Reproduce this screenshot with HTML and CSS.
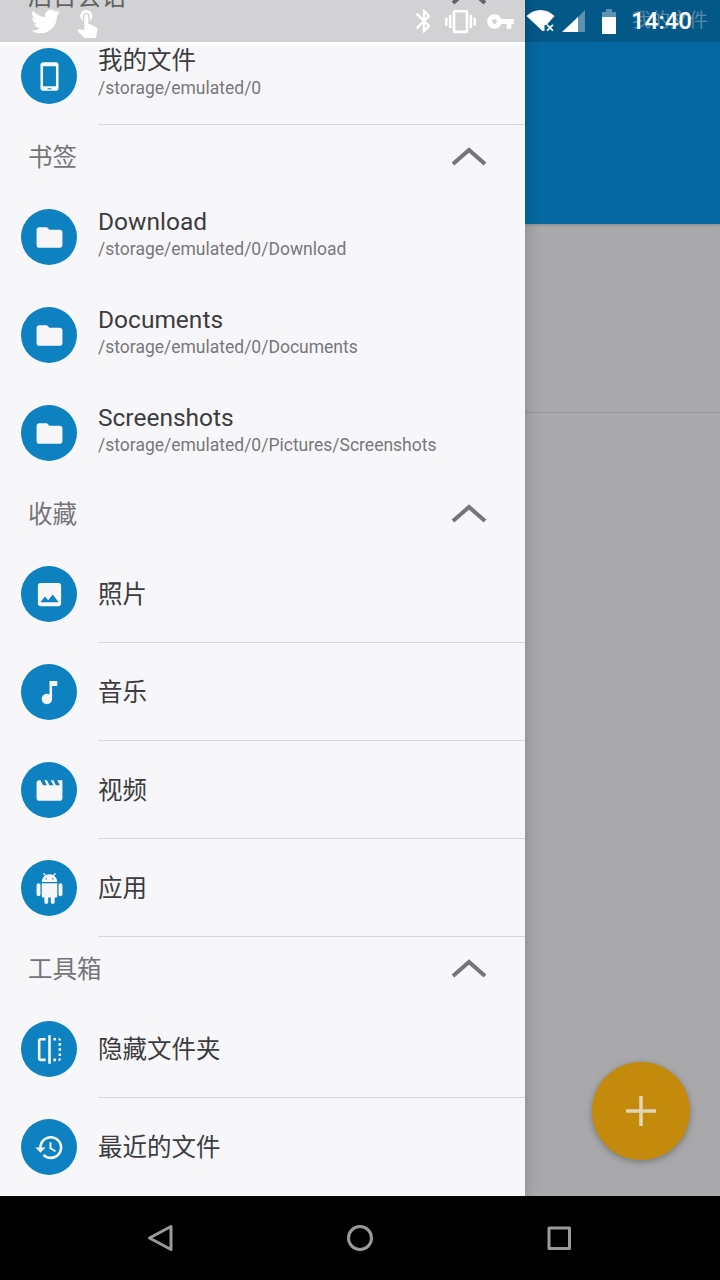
FILE: index.html
```html
<!DOCTYPE html>
<html lang="zh-CN">
<head>
    <meta charset="UTF-8">
    <meta name="viewport" content="width=device-width, initial-scale=1.0">
    <title>File Manager Drawer</title>
    <link rel="stylesheet" href="styles.css">
</head>
<body>
<div class="screen">

    <!-- Status Bar -->
    <div class="status-bar">
        <div class="status-left">
            <svg class="st-twitter" viewBox="0 0 24 24"><path d="M23.95 4.57a10 10 0 0 1-2.82.77 4.96 4.96 0 0 0 2.16-2.72c-.95.55-2 .95-3.12 1.18a4.92 4.92 0 0 0-8.38 4.48C7.69 8.1 4.07 6.13 1.64 3.16a4.82 4.82 0 0 0-.67 2.48c0 1.71.87 3.21 2.19 4.1a4.9 4.9 0 0 1-2.23-.61v.06c0 2.39 1.7 4.38 3.95 4.83-.41.11-.85.17-1.3.17-.31 0-.62-.03-.92-.08.63 1.96 2.45 3.39 4.6 3.43A9.87 9.87 0 0 1 0 19.54a13.9 13.9 0 0 0 7.55 2.21c9.05 0 14-7.5 14-13.98 0-.21 0-.42-.02-.63a9.94 9.94 0 0 0 2.42-2.57z"/></svg>
            <svg class="st-touch" viewBox="0 0 24 24"><path d="M9 11.24V7.5C9 6.12 10.12 5 11.5 5S14 6.12 14 7.5v3.74c1.21-.81 2-2.18 2-3.74C16 5.01 13.99 3 11.5 3S7 5.01 7 7.5c0 1.56.79 2.93 2 3.74zm9.84 4.63l-4.54-2.26c-.17-.07-.35-.11-.54-.11H13v-6c0-.83-.67-1.5-1.5-1.5S10 6.67 10 7.5v10.74l-3.43-.72c-.08-.01-.15-.03-.24-.03-.31 0-.59.13-.79.33l-.79.8 4.94 4.94c.27.27.65.44 1.06.44h6.79c.75 0 1.33-.55 1.44-1.28l.75-5.27c.01-.07.02-.14.02-.2 0-.62-.38-1.16-.91-1.38z"/></svg>
        </div>
        <div class="status-right">
            <svg class="st-bt" viewBox="0 0 24 24"><path d="M17.71 7.71L12 2h-1v7.59L6.41 5 5 6.41 10.59 12 5 17.59 6.41 19 11 14.41V22h1l5.71-5.71-4.3-4.29 4.3-4.29zM13 5.83l1.88 1.88L13 9.59V5.83zm1.88 10.46L13 18.17v-3.76l1.88 1.88z"/></svg>
            <svg class="st-vib" viewBox="0 0 24 24"><path d="M0 15h2V9H0v6zm3 2h2V7H3v10zm19-8v6h2V9h-2zm-3 8h2V7h-2v10zM16.5 3h-9C6.67 3 6 3.67 6 4.5v15c0 .83.67 1.5 1.5 1.5h9c.83 0 1.5-.67 1.5-1.5v-15c0-.83-.67-1.5-1.5-1.5zM16 19H8V5h8v14z"/></svg>
            <svg class="st-key" viewBox="0 0 24 24"><path d="M12.65 10C11.83 7.67 9.61 6 7 6c-3.31 0-6 2.69-6 6s2.69 6 6 6c2.61 0 4.83-1.67 5.65-4H17v4h4v-4h2v-4H12.65zM7 14c-1.1 0-2-.9-2-2s.9-2 2-2 2 .9 2 2-.9 2-2 2z"/></svg>
            <svg class="st-wifi" viewBox="0 0 30 24"><path d="M0 7C4 3 9 1 14 1s10 2 14 6l-8 9h-2v6h-2z" /><path d="M20 16.500l1.200-1.200 2.300 2.300 2.300-2.300 1.200 1.200-2.300 2.300 2.300 2.300-1.200 1.200-2.300-2.300-2.300 2.300-1.200-1.200 2.300-2.300z"/></svg>
            <svg class="st-signal" viewBox="0 0 24 24"><path class="dim" d="M24 1v22H15V10z"/><path d="M17 8v15H1z"/></svg>
            <svg class="st-battery" viewBox="0 0 16 26"><path class="dim" d="M5 1h6v3h4v7H1V4h4z"/><path d="M1 9h14v17H1z"/></svg>
            <span class="status-time">14:40</span>
        </div>
    </div>

    <div class="content">

        <!-- Drawer -->
        <aside class="drawer">
            <div class="drawer-list">

                <div class="section-head">
                    <span>后台会话</span>
                    <svg class="chevron" viewBox="0 0 36 20"><path d="M2 17L18 3l16 14"/></svg>
                </div>
                <div class="row">
                    <span class="row-icon"><svg viewBox="0 0 24 24"><path fill-rule="evenodd" d="M7 1h10c1.100 0 2 .9 2 2v18c0 1.100-.9 2-2 2H7c-1.100 0-2-.9-2-2V3c0-1.100.9-2 2-2zm0 3v15.500h10V4zm3.500 17v.8h3V21z"/></svg></span>
                    <div class="row-text lined">
                        <div class="row-title">我的文件</div>
                        <div class="row-sub">/storage/emulated/0</div>
                    </div>
                </div>

                <div class="section-head">
                    <span>书签</span>
                    <svg class="chevron" viewBox="0 0 36 20"><path d="M2 17L18 3l16 14"/></svg>
                </div>
                <div class="row">
                    <span class="row-icon"><svg viewBox="0 0 24 24"><path d="M10 4H4c-1.100 0-1.990.9-1.990 2L2 18c0 1.100.9 2 2 2h16c1.100 0 2-.9 2-2V8c0-1.100-.9-2-2-2h-8l-2-2z"/></svg></span>
                    <div class="row-text">
                        <div class="row-title">Download</div>
                        <div class="row-sub">/storage/emulated/0/Download</div>
                    </div>
                </div>
                <div class="row">
                    <span class="row-icon"><svg viewBox="0 0 24 24"><path d="M10 4H4c-1.100 0-1.990.9-1.990 2L2 18c0 1.100.9 2 2 2h16c1.100 0 2-.9 2-2V8c0-1.100-.9-2-2-2h-8l-2-2z"/></svg></span>
                    <div class="row-text">
                        <div class="row-title">Documents</div>
                        <div class="row-sub">/storage/emulated/0/Documents</div>
                    </div>
                </div>
                <div class="row">
                    <span class="row-icon"><svg viewBox="0 0 24 24"><path d="M10 4H4c-1.100 0-1.990.9-1.990 2L2 18c0 1.100.9 2 2 2h16c1.100 0 2-.9 2-2V8c0-1.100-.9-2-2-2h-8l-2-2z"/></svg></span>
                    <div class="row-text">
                        <div class="row-title">Screenshots</div>
                        <div class="row-sub">/storage/emulated/0/Pictures/Screenshots</div>
                    </div>
                </div>

                <div class="section-head">
                    <span>收藏</span>
                    <svg class="chevron" viewBox="0 0 36 20"><path d="M2 17L18 3l16 14"/></svg>
                </div>
                <div class="row">
                    <span class="row-icon"><svg viewBox="0 0 24 24"><path d="M21 19V5c0-1.100-.9-2-2-2H5c-1.100 0-2 .9-2 2v14c0 1.100.9 2 2 2h14c1.100 0 2-.9 2-2zM8.500 13.500l2.500 3.010L14.500 12l4.500 6H5l3.500-4.500z"/></svg></span>
                    <div class="row-text lined"><div class="row-title">照片</div></div>
                </div>
                <div class="row">
                    <span class="row-icon"><svg viewBox="0 0 24 24"><path d="M12 3v10.550c-.59-.34-1.270-.55-2-.55-2.210 0-4 1.790-4 4s1.790 4 4 4 4-1.790 4-4V7h4V3h-6z"/></svg></span>
                    <div class="row-text lined"><div class="row-title">音乐</div></div>
                </div>
                <div class="row">
                    <span class="row-icon"><svg viewBox="0 0 24 24"><path d="M18 4l2 4h-3l-2-4h-2l2 4h-3l-2-4H8l2 4H7L5 4H4c-1.100 0-1.990.9-1.990 2L2 18c0 1.100.9 2 2 2h16c1.100 0 2-.9 2-2V4h-4z"/></svg></span>
                    <div class="row-text lined"><div class="row-title">视频</div></div>
                </div>
                <div class="row">
                    <span class="row-icon"><svg viewBox="0 0 24 24"><path d="M6 18c0 .55.45 1 1 1h1v3.500c0 .83.67 1.500 1.500 1.500s1.500-.67 1.500-1.500V19h2v3.500c0 .83.67 1.500 1.500 1.500s1.500-.67 1.500-1.500V19h1c.55 0 1-.45 1-1V8H6v10zM3.500 8C2.670 8 2 8.670 2 9.500v7c0 .83.67 1.500 1.500 1.500S5 17.330 5 16.500v-7C5 8.670 4.330 8 3.500 8zm17 0c-.83 0-1.500.67-1.500 1.500v7c0 .83.67 1.500 1.500 1.500s1.500-.67 1.500-1.500v-7c0-.83-.67-1.500-1.500-1.500zm-4.970-5.840l1.300-1.300c.2-.2.2-.51 0-.71-.2-.2-.51-.2-.71 0l-1.480 1.480C13.850 1.230 12.950 1 12 1c-.96 0-1.860.23-2.660.63L7.850.15c-.2-.2-.51-.2-.71 0-.2.2-.2.51 0 .71l1.310 1.310C6.970 3.260 6 5.010 6 7h12c0-1.990-.97-3.750-2.470-4.840zM10 5H9V4h1v1zm5 0h-1V4h1v1z"/></svg></span>
                    <div class="row-text lined"><div class="row-title">应用</div></div>
                </div>

                <div class="section-head">
                    <span>工具箱</span>
                    <svg class="chevron" viewBox="0 0 36 20"><path d="M2 17L18 3l16 14"/></svg>
                </div>
                <div class="row">
                    <span class="row-icon"><svg viewBox="0 0 24 24"><path d="M15 21h2v-2h-2v2zm4-12h2V7h-2v2zM3 5v14c0 1.100.9 2 2 2h4v-2H5V5h4V3H5c-1.100 0-2 .9-2 2zm16-2v2h2c0-1.100-.9-2-2-2zm-8 20h2V1h-2v22zm8-6h2v-2h-2v2zM15 5h2V3h-2v2zm4 8h2v-2h-2v2zm0 8c1.100 0 2-.9 2-2h-2v2z"/></svg></span>
                    <div class="row-text lined"><div class="row-title">隐藏文件夹</div></div>
                </div>
                <div class="row">
                    <span class="row-icon"><svg viewBox="0 0 24 24"><path d="M13 3c-4.970 0-9 4.030-9 9H1l3.890 3.890.07.14L9 12H6c0-3.870 3.130-7 7-7s7 3.130 7 7-3.130 7-7 7c-1.930 0-3.680-.79-4.940-2.060l-1.420 1.420C8.270 19.990 10.510 21 13 21c4.970 0 9-4.030 9-9s-4.030-9-9-9zm-1 5v5l4.280 2.540.72-1.210-3.500-2.080V8H12z"/></svg></span>
                    <div class="row-text"><div class="row-title">最近的文件</div></div>
                </div>

            </div>
        </aside>

        <!-- Dimmed page behind the drawer -->
        <main class="behind">
            <div class="toolbar"><span class="toolbar-title">我的文件</span></div>
            <div class="behind-row"></div>
            <button class="fab"><svg viewBox="0 0 30 30"><path d="M15 0v30M0 15h30"/></svg></button>
        </main>
    </div>

    <!-- Navigation Bar -->
    <nav class="nav-bar">
        <svg class="nav-icon" viewBox="0 0 28 28"><path d="M25 2.500v23L3.500 14z"/></svg>
        <svg class="nav-icon" viewBox="0 0 28 28"><circle cx="14" cy="14" r="11.500"/></svg>
        <svg class="nav-icon" viewBox="0 0 28 28"><path d="M3 4h20.500v20.500H3z"/></svg>
    </nav>
</div>
</body>
</html>
```

FILE: styles.css
```css
/* Basic Styles */
body {
    margin: 0;
    padding: 0;
    background-color: #000;
    font-family: Roboto, "Noto Sans CJK SC", sans-serif;
}

.screen {
    position: relative;
    width: 720px;
    height: 1280px;
    overflow: hidden;
}

.content {
    display: flex;
    height: 1196px;
}

/* Status Bar */
.status-bar {
    position: absolute;
    top: 0;
    left: 0;
    right: 0;
    z-index: 5;
    height: 42px;
    display: flex;
    justify-content: space-between;
    align-items: center;
    background: rgba(0, 0, 0, 0.15);
}

.status-bar svg {
    display: block;
    fill: #fff;
}

.status-left,
.status-right {
    display: flex;
    align-items: center;
}

.status-left {
    padding-left: 31px;
}

.status-right {
    padding-right: 28px;
}

.st-twitter {
    width: 29px;
    height: 29px;
}

.st-touch {
    width: 32px;
    height: 32px;
    margin-left: 11px;
    margin-top: 2px;
}

.st-bt {
    width: 28px;
    height: 28px;
}

.st-vib {
    width: 31px;
    height: 31px;
    margin-left: 7px;
}

.st-key {
    width: 29px;
    height: 29px;
    margin-left: 10px;
}

.st-wifi {
    width: 31px;
    height: 24px;
    margin-left: 11px;
}

.st-signal {
    width: 24px;
    height: 24px;
    margin-left: 4px;
}

.st-battery {
    width: 16px;
    height: 26px;
    margin-left: 16px;
}

.status-bar .dim {
    opacity: 0.35;
}

.status-time {
    margin-left: 14px;
    color: #fff;
    font-size: 24px;
    font-weight: 500;
    line-height: 42px;
}

/* Drawer */
.drawer {
    position: relative;
    z-index: 2;
    flex: 0 0 525px;
    overflow: hidden;
    background-color: #f7f7f9;
    box-shadow: 0 0 14px rgba(0, 0, 0, 0.22);
}

/* pale strip just under the status bar */
.drawer::before {
    content: "";
    position: absolute;
    top: 42px;
    left: 0;
    right: 0;
    height: 4px;
    background: rgba(255, 255, 255, 0.6);
}

.drawer-list {
    margin-top: -36px;
}

.section-head {
    display: flex;
    justify-content: space-between;
    align-items: center;
    height: 63px;
    padding: 0 38px 0 28px;
    color: #757578;
    font-size: 24.500px;
}

.section-head span {
    margin-bottom: 2px;
}

.chevron {
    display: block;
    width: 36px;
    height: 20px;
    fill: none;
    stroke: #757578;
    stroke-width: 4;
}

.row {
    display: flex;
    align-items: center;
    height: 98px;
}

.row-icon {
    display: flex;
    justify-content: center;
    align-items: center;
    flex: 0 0 56px;
    height: 56px;
    margin: 0 21px;
    border-radius: 50%;
    background-color: #0e82c0;
}

.row-icon svg {
    display: block;
    width: 31px;
    height: 31px;
    fill: #f7f7f9;
}

.row-text {
    flex: 1;
    box-sizing: border-box;
    height: 100%;
    display: flex;
    flex-direction: column;
    justify-content: center;
}

.row-text.lined {
    border-bottom: 1px solid #d8d8da;
}

.row-title {
    color: #3c3c40;
    font-size: 24.500px;
    line-height: 28px;
}

.row-title:only-child {
    margin-top: 2px;
}

.row-sub {
    margin-bottom: 4px;
    color: #77777b;
    font-size: 17.500px;
    line-height: 26px;
}

/* Page behind the drawer */
.behind {
    position: relative;
    flex: 1;
    background-color: #a9a9ac;
}

.toolbar {
    height: 224px;
    box-sizing: border-box;
    padding: 8px 12px 0 0;
    display: flex;
    justify-content: flex-end;
    align-items: flex-start;
    background-color: #0568a0;
    box-shadow: 0 1px 3px rgba(0, 0, 0, 0.2);
}

.toolbar-title {
    color: rgba(255, 255, 255, 0.4);
    font-size: 19px;
    line-height: 26px;
}

.behind-row {
    height: 188px;
    border-bottom: 1px solid #98989a;
}

.fab {
    position: absolute;
    right: 30px;
    bottom: 36px;
    display: flex;
    justify-content: center;
    align-items: center;
    width: 98px;
    height: 98px;
    padding: 0;
    border: none;
    border-radius: 50%;
    background-color: #c48a0c;
    box-shadow: 0 2px 7px rgba(0, 0, 0, 0.3);
}

.fab svg {
    display: block;
    width: 30px;
    height: 30px;
    fill: none;
    stroke: #e0d6b4;
    stroke-width: 3.500;
}

/* Navigation Bar */
.nav-bar {
    display: flex;
    align-items: center;
    gap: 172px;
    height: 84px;
    padding-left: 146px;
    background-color: #000;
}

.nav-icon {
    display: block;
    width: 28px;
    height: 28px;
    fill: none;
    stroke: #9a9a9a;
    stroke-width: 3;
    stroke-linejoin: round;
}
```
